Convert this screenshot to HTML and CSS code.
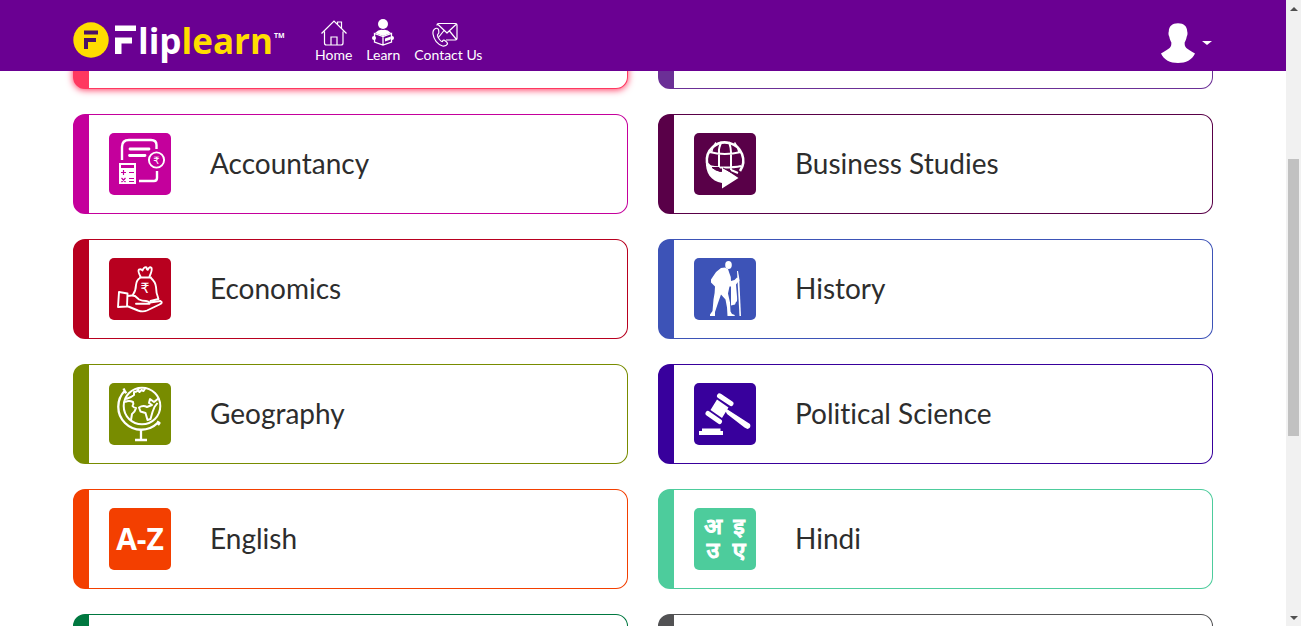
FILE: index.html
```html
<!DOCTYPE html>
<html lang="en">
<head>
<meta charset="utf-8">
<title>Fliplearn</title>
<meta name="viewport" content="width=device-width, initial-scale=1">
<link rel="stylesheet" href="styles.css">
</head>
<body>
<div class="window">
  <div class="page">
    <header class="topbar">
      <div class="container topbar-inner">
        <a class="logo" href="#" aria-label="Fliplearn">
          <svg width="212" height="50" viewBox="0 0 212 50">
            <circle cx="18" cy="22" r="17.7" fill="#fd0"/>
            <path d="M11 12.500h14v4H11zM11 20h12v4h-8v7h-4z" fill="#4b1166"/>
            <path d="M42 7.500h21v5.500H42zM42 19.500h17v6h-10.500V36H42z" fill="#fff"/>
            <text class="logo-word" x="65" y="36"><tspan fill="#fff">lip</tspan><tspan fill="#fd0">learn</tspan></text>
            <text class="logo-tm" x="201" y="20">TM</text>
          </svg>
        </a>
        <nav class="nav">
          <a class="nav-item" href="#">
            <svg width="28" height="28" viewBox="0 -1 28 28" fill="none" stroke="#fff" stroke-width="1.200">
              <path d="M1.500 14.500 14 2l12.500 12.500M4.500 12.500V24q0 2 2 2h14.500q2 0 2-2V12.500M17.500 5V3h4v7M11 26v-8h6v8"/>
            </svg>
            <span>Home</span>
          </a>
          <a class="nav-item" href="#">
            <svg width="28" height="28" viewBox="0 -1 28 28">
              <circle cx="14" cy="5" r="5" fill="#fff"/>
              <path d="M6 14q4-4 8-3 4-1 8 3l-8 3z" fill="#fff"/>
              <path d="M5.500 14.500 14 17.500l8.500-3V23L14 26l-8.500-3zM14 17.500V26" fill="#6a0092" stroke="#fff" stroke-width="1.300"/>
              <path d="M16 19.500l5-1.800v3l-5 1.800z" fill="#fff"/>
              <circle cx="5" cy="19" r="2" fill="#fff"/><circle cx="23" cy="19" r="2" fill="#fff"/>
            </svg>
            <span>Learn</span>
          </a>
          <a class="nav-item" href="#">
            <svg width="28" height="28" viewBox="3 -1 28 28" fill="none" stroke="#fff" stroke-width="1.200" stroke-linejoin="round" overflow="visible">
              <path d="M6 6.500V6q0-1.500 1.500-1.500h17Q26 4.500 26 6v13.500q0 1.500-1.500 1.500H15M6.500 5l9.500 9 9.500-9M7 19l6-7.500M25.500 20.500 18.500 12"/>
              <path d="M4.500 9.500Q1.500 11 2 15q1.500 9 9.500 12 3.500.5 5-2 .3-1.500-3-3.800-1.500-.5-2 1.300-1 .5-3-2T6.500 16q.5-1 1.300-2Q8 10 6.500 9.500q-1-.5-2 0z"/>
            </svg>
            <span>Contact Us</span>
          </a>
        </nav>
        <button class="account" type="button" aria-label="Account">
          <svg width="36" height="42" viewBox="0 0 36 42" fill="#fff">
            <path d="M18 1.200c6 0 9 3 9.200 8 .6 2 .3 4-.5 5.500-.5 3-1.500 4.500-2 5.500-.5 5.500 1.500 6 10.300 11.300C32 38 26 41 18 41S4 38 1 31.500c8.800-5.300 10.800-5.800 10.300-11.300-.5-1-1.500-2.500-2-5.500-.8-1.500-1.100-3.500-.5-5.500.2-5 3.200-8 9.200-8z"/>
          </svg>
          <span class="caret"></span>
        </button>
      </div>
    </header>

    <main class="content">
      <div class="container subjects">
        <a class="card card-red is-active" href="#"></a>
        <a class="card card-violet" href="#"></a>

        <a class="card card-magenta" href="#">
          <svg class="tile" viewBox="0 0 62 62" fill="none" stroke="#fff">
            <path d="M13 27V14q0-7 7-7h22q5.500 0 5.500 5v4M30 48h15q3 0 3-3v-7" stroke-width="2.400"/>
            <path d="M21 16h19M20.500 22.500H36" stroke-width="2.800" stroke-linecap="round"/>
            <circle cx="47.500" cy="27" r="7.600" stroke-width="1.900"/>
            <text class="rupee-small" x="47.500" y="31">₹</text>
            <path d="M10 30h17v21H10z" fill="#fff" stroke="none"/>
            <path d="M12 39.500h5M14.500 37v5M20 39.500h5M12.500 45l4 4M16.500 45l-4 4M20 45.500h5M20 48.500h5" stroke="#c4009c" stroke-width="1.200"/>
            <path d="M12 33.500h13" stroke="#c4009c" stroke-width="3.200"/>
          </svg>
          <span class="name">Accountancy</span>
        </a>
        <a class="card card-plum" href="#">
          <svg class="tile" viewBox="0 0 62 62" fill="none" stroke="#fff">
            <path d="M13 30a18.200 18.200 0 1 1 33 8" stroke-width="2.600"/>
            <path d="M15.500 19q15 4 31.500 0M14 33q6 1.500 15 1.500 12 0 18-1.500M27.500 9q-3 6-2.500 10v15M35 9q2 6 2 10v18M37 37l7 3" stroke-width="2"/>
            <path d="M22 9.500q-4 5-4.500 10M40.500 9.500q4 5 4.500 10" stroke-width="1.600"/>
            <path d="M12 27C11 40 17 48 28 50v5.500L44.500 45 28 34v5q-6-.5-13.500-9z" fill="#fff" stroke="none"/>
            <path d="M18 34.500h7l1.500 4q-5-1-8.500-4zM29 35 45 43.500" fill="#590048" stroke="#590048" stroke-width="1"/>
          </svg>
          <span class="name">Business Studies</span>
        </a>

        <a class="card card-crimson" href="#">
          <svg class="tile" viewBox="0 0 62 62" fill="none" stroke="#fff" stroke-width="1.900" stroke-linejoin="round" stroke-linecap="round">
            <path d="M31.500 18.500q-3-5.500-1.500-7 2-1 3.500 1 1.500-4 4-3 .5 3 1.500 2 1.500-3.500 3.500-1.500 1 2-2 8.500"/>
            <path d="M31 19.500h11M31 20q-3.500 2-4 7-.2 6-3 9.500M42 20q4.500 4 5 9 0 6 2.500 12l-8 2"/>
            <path d="M10 34l8.500 1.500-.5 13-9 .5zM18.500 38q5-1 7.500 0l4 3.500q3 1.500 7 1.500 4 .5 3.500 2.800H27M41 44.500l10.500-1.500q3 1.500-1 3.500L38 52.500q-4 1.800-9 0L18 48"/>
            <text class="rupee" x="36" y="35">₹</text>
          </svg>
          <span class="name">Economics</span>
        </a>
        <a class="card card-blue" href="#">
          <svg class="tile" viewBox="0 0 62 62" fill="#fff">
            <ellipse cx="34.500" cy="7" rx="3.300" ry="4"/>
            <path d="M31 9.500 27 10q-5 3-8 8.500l-2 3v3l4 4q0 6-1.500 13L18.500 53l-2.500 3.500v1.500h5v-4l3-9 3-8.500 4.500 5 1.500 8 .5 8.500h7.500q0-1.500-3-2l-1.500-2.500-.5-9-2-9 1.500-7H37v19l4-1 1-2.500q1.500 0 1-5.500l-1-12 2-2.500 1.500-1-.5-2.500-2-1-2.500 2.500-3.500 1q0-5-1.500-7.500L34 11z"/>
            <path d="M43 13h1l1.200 7L47 58h-1.500z"/>
          </svg>
          <span class="name">History</span>
        </a>

        <a class="card card-olive" href="#">
          <svg class="tile" viewBox="0 0 62 62" fill="none" stroke="#fff" stroke-width="2" stroke-linejoin="round">
            <circle cx="33" cy="23" r="18.300"/>
            <path d="M16 7.500A22.900 22.900 0 0 0 48.500 40M14.500 5.500l2 4 1-1M48 38.500l2.500 1.500-1.500 2" stroke-width="2.300"/>
            <path d="M32 47v10M26 57h12" stroke-width="2.300"/>
            <path d="M16 19q4-2 8 0 1 2-.5 4 1.500 2 3.500 2-1 4-4 6l-1 6M17 16l5-2 3-2V9q4 0 5-4M28 6l2.500 3 2-2 2 1 2-3M50 15l-5 4-4-3-1 4 3 2-5 2q-4-2-8 .5l1.500 4 5 1.500 2 7 3-1 2-7 2-5 3-4" stroke-width="2"/>
          </svg>
          <span class="name">Geography</span>
        </a>
        <a class="card card-indigo" href="#">
          <svg class="tile" viewBox="0 0 62 62" fill="#fff">
            <path d="M25.500 12.800 37 20.500M14 30.500 25.500 38.500" stroke="#fff" stroke-width="5" stroke-linecap="round"/>
            <path d="M23 16.500 34.500 24.500 28 35 16.500 27zM31.500 28l2-1.500 22.500 14.500q1.500 4-2.500 5l-3-1.500L33 31z"/>
            <path d="M5 48h3v-2.500h18.500V48H29v4H5z"/>
          </svg>
          <span class="name">Political Science</span>
        </a>

        <a class="card card-orange" href="#">
          <svg class="tile" viewBox="0 0 62 62"><text class="az" x="31" y="42">A-Z</text></svg>
          <span class="name">English</span>
        </a>
        <a class="card card-mint" href="#">
          <svg class="tile" viewBox="0 0 62 62">
            <g class="hindi"><text x="19" y="26">अ</text><text x="45" y="26">इ</text><text x="19" y="50">उ</text><text x="45" y="50">ए</text></g>
          </svg>
          <span class="name">Hindi</span>
        </a>

        <a class="card card-green" href="#"></a>
        <a class="card card-gray" href="#"></a>
      </div>
    </main>
  </div>

  <div class="scrollbar" aria-hidden="true">
    <span class="arrow arrow-up"></span>
    <div class="track"><span></span><span class="thumb"></span><span></span></div>
    <span class="arrow arrow-down"></span>
  </div>
</div>
</body>
</html>
```
FILE: styles.css
```css
* { box-sizing: border-box; }

body {
  margin: 0;
  background: #fff;
  color: #2d2d2d;
  font-family: Lato, "Liberation Sans", sans-serif;
  font-variant-ligatures: none;
}

a { color: inherit; text-decoration: none; }

.window {
  display: grid;
  grid-template-columns: 1fr 15px;
  height: 100vh;
  overflow: hidden;
}

.page {
  display: flex;
  flex-direction: column;
  min-width: 0;
  min-height: 0;
}

.container {
  width: 100%;
  max-width: 1140px;
  margin: 0 auto;
}

/* Top bar */
.topbar {
  flex: none;
  background: #6a0092;
  color: #fff;
}

.topbar-inner {
  display: flex;
  align-items: flex-start;
  height: 71px;
  padding-top: 18px;
}

.logo svg { display: block; overflow: visible; }
.logo-word { font: 700 35px "Open Sans", sans-serif; }
.logo-tm { font: 700 7px "Open Sans", sans-serif; fill: #fff; }

.nav {
  display: flex;
  gap: 14px;
  margin-left: 30px;
}

.nav-item {
  display: flex;
  flex-direction: column;
  align-items: center;
  font-size: 14px;
  line-height: 18px;
}

.nav-item svg { display: block; }

.account {
  display: flex;
  align-items: center;
  gap: 6px;
  margin-left: auto;
  padding: 4px 1px 0 0;
  border: 0;
  background: none;
}

.caret {
  border: 5px solid transparent;
  border-top: 4px solid #fff;
  border-bottom: 0;
}

/* Subject cards */
.content {
  flex: 1;
  min-height: 0;
  overflow: hidden;
}

.subjects {
  display: grid;
  grid-template-columns: 1fr 1fr;
  gap: 25px 30px;
  margin-top: -82px;
}

.card {
  display: flex;
  align-items: center;
  gap: 39px;
  height: 100px;
  padding-left: 20px;
  border: 1px solid var(--tone);
  border-left-width: 16px;
  border-radius: 12px;
  background: #fff;
}

.is-active { box-shadow: 0 1px 7px var(--tone); }

.tile {
  flex: none;
  width: 62px;
  height: 62px;
  border-radius: 5px;
  background: var(--tone);
}

.name { padding-bottom: 2px; font-size: 28px; line-height: 36px; }

.rupee, .rupee-small {
  font: 400 14px "DejaVu Sans", sans-serif;
  fill: #fff;
  stroke: none;
  text-anchor: middle;
}

.rupee-small { font-size: 10px; }

.az {
  font: 700 30px "Open Sans", sans-serif;
  fill: #fff;
  text-anchor: middle;
}

.hindi {
  font: 500 23px "Noto Sans", "Noto Sans Devanagari", sans-serif;
  fill: #fff;
  stroke: #fff;
  stroke-width: 1px;
  text-anchor: middle;
}

.card-red { --tone: #ff3860; }
.card-violet { --tone: #6b2f96; }
.card-magenta { --tone: #c4009c; }
.card-plum { --tone: #590048; }
.card-crimson { --tone: #b8001f; }
.card-blue { --tone: #3d53b7; }
.card-olive { --tone: #788c00; }
.card-indigo { --tone: #38009c; }
.card-orange { --tone: #f33f00; }
.card-mint { --tone: #4dcc9c; }
.card-green { --tone: #007840; }
.card-gray { --tone: #525254; }

/* Scroll bar */
.scrollbar {
  display: flex;
  flex-direction: column;
  background: #f1f1f1;
}

.arrow {
  display: flex;
  align-items: center;
  justify-content: center;
  height: 17px;
}

.arrow::before {
  content: "";
  border: 4px solid transparent;
}

.arrow-up::before { border-top: 0; border-bottom-color: #505050; }
.arrow-down::before { border-bottom: 0; border-top-color: #505050; }

.track {
  flex: 1;
  display: grid;
  grid-template-rows: 142fr 277fr 173fr;
  padding: 0 2px;
}

.thumb { background: #c1c1c1; }
```
